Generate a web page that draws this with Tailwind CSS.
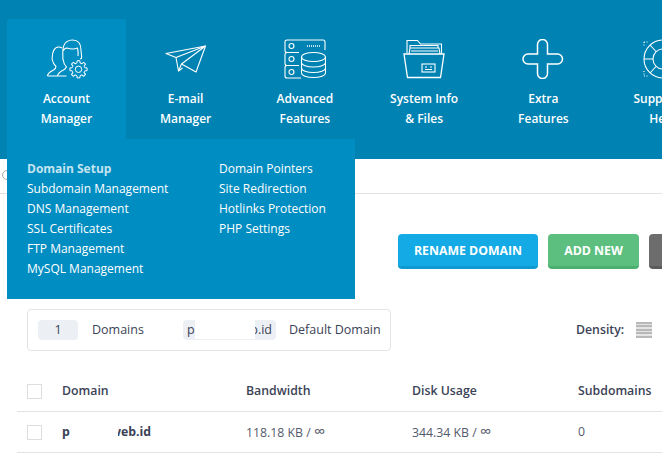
<!DOCTYPE html>
<html>
<head>
<meta charset="utf-8">
<script src="https://cdn.jsdelivr.net/npm/@tailwindcss/browser@4"></script>
</head>
<body class="bg-white overflow-hidden font-['Open_Sans',sans-serif]">
<div class="relative w-[662px] h-[459px] overflow-hidden">
  <header class="h-[159px] bg-[#0083b3] pt-[19px] pl-[7px] flex text-white text-[12px] leading-[20px] font-semibold text-center">
    <div class="w-[119px] h-[120px] shrink-0 bg-[#008dc2] rounded-t-[2px] pt-[20px]">
      <svg class="mx-auto w-[42px] h-[40px]" viewBox="0 0 42 40" fill="none" stroke="white" stroke-width="1.100" stroke-linejoin="round">
        <path d="M1.500 37c0-3 3-4.500 6-6 1.500-1 2.500-2 2.500-3.500-1.500-1.500-3-3.500-3.500-6-.5-1-.5-2-.3-3 0-5 2-10.500 6.300-10.500 1.500 0 2.700.3 3.500 1M1.500 37h10M11.500 37c.3-3 3-4.500 6-6 2-1 2.500-2 3-3.500M11.500 37h9"/>
        <path d="M20.500 28c-1.800-2-3-4.500-3.300-7-.5-1-.5-2-.3-3.500C16.500 12 16 1 26.500 1c6.500 0 8.500 5 8.500 10 0 3 1 5 .5 8.500l-1.500.5M17 12c1-2 3-3 4-3 3 1 8 1 10.500 0 .5 2 1 5 .5 8"/>
        <g transform="translate(32.500 30.300)" stroke-width="1">
          <circle r="3.200"/>
          <path d="M-2.490-6L-1.570-6.310-1.360-8.590 1.360-8.590 1.570-6.310 2.490-6"/>
          <path transform="rotate(45)" d="M-2.490-6L-1.570-6.310-1.360-8.590 1.360-8.590 1.570-6.310 2.490-6"/>
          <path transform="rotate(90)" d="M-2.490-6L-1.570-6.310-1.360-8.590 1.360-8.590 1.570-6.310 2.490-6"/>
          <path transform="rotate(135)" d="M-2.490-6L-1.570-6.310-1.360-8.590 1.360-8.590 1.570-6.310 2.490-6"/>
          <path transform="rotate(180)" d="M-2.490-6L-1.570-6.310-1.360-8.590 1.360-8.590 1.570-6.310 2.490-6"/>
          <path transform="rotate(225)" d="M-2.490-6L-1.570-6.310-1.360-8.590 1.360-8.590 1.570-6.310 2.490-6"/>
          <path transform="rotate(270)" d="M-2.490-6L-1.570-6.310-1.360-8.590 1.360-8.590 1.570-6.310 2.490-6"/>
          <path transform="rotate(315)" d="M-2.490-6L-1.570-6.310-1.360-8.590 1.360-8.590 1.570-6.310 2.490-6"/>
        </g>
      </svg>
      <div class="mt-[10px]">Account<br>Manager</div>
    </div>
    <div class="w-[119.250px] h-[120px] shrink-0 pt-[20px]">
      <svg class="mx-auto w-[42px] h-[40px]" viewBox="0 0 42 40" fill="none" stroke="white" stroke-width="1.100" stroke-linejoin="round">
        <path d="M1 14.500L40.500 7 31 33l-14.500-8-3 7-2.500-13.500z"/>
        <path d="M40.500 7L11 18.500M40.500 7L16.500 25M13.500 32l4-3"/>
      </svg>
      <div class="mt-[10px]">E-mail<br>Manager</div>
    </div>
    <div class="w-[119.250px] h-[120px] shrink-0 pt-[20px]">
      <svg class="mx-auto w-[42px] h-[40px]" viewBox="0 0 42 40" fill="none" stroke="white" stroke-width="1.100">
        <path d="M15 13.500H3a2 2 0 0 1-2-2V3a2 2 0 0 1 2-2h36a2 2 0 0 1 2 2v8"/>
        <path d="M15 26.500H3a2 2 0 0 1-2-2V15.500a2 2 0 0 1 2-2h12M15 26.500H3a2 2 0 0 0-2 2V37a2 2 0 0 0 2 2h14"/>
        <circle cx="7.500" cy="7" r="2.500"/><circle cx="7.500" cy="20" r="2.500"/><circle cx="7.500" cy="33" r="2.500"/>
        <path stroke-width="1.500" stroke-dasharray="1 1" d="M23 7h13"/>
        <ellipse cx="29.500" cy="18" rx="12" ry="4.500"/>
        <path d="M17.500 18v16c0 2.500 5.500 4.500 12 4.500s12-2 12-4.500V18M17.500 23.500c0 2.500 5.500 4.500 12 4.500s12-2 12-4.500M17.500 29c0 2.500 5.500 4.500 12 4.500s12-2 12-4.500"/>
      </svg>
      <div class="mt-[10px]">Advanced<br>Features</div>
    </div>
    <div class="w-[119.250px] h-[120px] shrink-0 pt-[20px]">
      <svg class="mx-auto w-[42px] h-[40px]" viewBox="0 0 42 40" fill="none" stroke="white" stroke-width="1.100">
        <path d="M4 14V1.500h10.500l3 3.500h21v10"/>
        <path d="M6 15l1-6h29l1 6M7 9V6.500h28V9M8 12h27"/>
        <path stroke-width="1.300" d="M1 15h40l-3.500 23.500h-33z"/>
        <rect x="19" y="25" width="13" height="8"/>
        <path d="M22 28h2M27 28h2M22 30.500h7"/>
      </svg>
      <div class="mt-[10px]">System Info<br>&amp; Files</div>
    </div>
    <div class="w-[119.250px] h-[120px] shrink-0 pt-[20px]">
      <svg class="mx-auto w-[42px] h-[40px]" viewBox="0 0 42 40" fill="none" stroke="white" stroke-width="1.500">
        <path d="M15.500 5.500a5 5 0 0 1 10 0v9.500H35.500a5 5 0 0 1 0 10H25.500v9.500a5 5 0 0 1-10 0V25H6a5 5 0 0 1 0-10h9.500z"/>
      </svg>
      <div class="mt-[10px]">Extra<br>Features</div>
    </div>
    <div class="w-[119.250px] h-[120px] shrink-0 pt-[20px]">
      <svg class="mx-auto w-[42px] h-[40px]" viewBox="0 0 42 40" fill="none" stroke="white" stroke-width="1.100">
        <circle cx="21" cy="20" r="19"/>
        <circle cx="21" cy="20" r="10"/>
        <path d="M8 6l6 6.500M34 6l-6 6.500M8 34l6-6.500M34 34l-6-6.500M2 20h9M31 20h9"/>
        <path stroke-dasharray="1 1.500" d="M2 3h4M2 3v5M2 32v5h4"/>
      </svg>
      <div class="mt-[10px]">Support &amp;<br>Help</div>
    </div>
  </header>

  <nav class="absolute left-[7px] top-[139px] w-[348px] h-[160px] bg-[#008dc2] pt-[20px] pl-[20px] flex text-[12px] leading-[20px] text-white">
    <ul class="w-[192px]">
      <li class="font-bold text-[#c4e4f0]">Domain Setup</li>
      <li>Subdomain Management</li>
      <li>DNS Management</li>
      <li>SSL Certificates</li>
      <li>FTP Management</li>
      <li>MySQL Management</li>
    </ul>
    <ul>
      <li>Domain Pointers</li>
      <li>Site Redirection</li>
      <li>Hotlinks Protection</li>
      <li>PHP Settings</li>
    </ul>
  </nav>

  <div class="h-[35px] border-b border-[#e2e2e2] pl-[2px] pt-[11px]">
    <div class="w-[10px] h-[10px] rounded-full border border-[#aaaaaa]"></div>
  </div>

  <div class="flex gap-[10px] pt-[40px] h-[75px] pl-[398px] text-white text-[12.300px] font-bold">
    <div class="w-[140px] shrink-0 h-[35px] rounded-[4px] bg-[#13aae6] border-b-[3px] border-[#0f99d0] pt-[3px] flex items-center justify-center">RENAME DOMAIN</div>
    <div class="w-[91px] shrink-0 h-[35px] rounded-[4px] bg-[#5cbf7f] border-b-[3px] border-[#4bb06f] pt-[3px] flex items-center justify-center">ADD NEW</div>
    <div class="w-[60px] shrink-0 h-[35px] rounded-[4px] bg-[#6d6d6d] border-b-[3px] border-[#5c5c5c]"></div>
  </div>

  <div class="flex items-center pl-[27px] mt-[40px] text-[12.500px] text-[#3b4256]">
    <div class="relative w-[364px] h-[42px] border border-[#e2e5e8] rounded-[4px] flex items-center pl-[10px]">
      <div class="w-[40px] h-[20px] bg-[#ecf0f5] rounded-[4px] text-center leading-[20px]">1</div>
      <div class="ml-[14px] w-[91px]">Domains</div>
      <div class="relative w-[93px] h-[20px] bg-[#ecf0f5] rounded-[4px] leading-[20px] px-[4px] flex justify-between">
        <span>p</span><span>web.id</span>
        <div class="absolute left-[12px] top-0 w-[60px] h-[19px] bg-white"></div>
      </div>
      <div class="ml-[13px]">Default Domain</div>
    </div>
    <div class="ml-[185px] w-[60px] font-semibold text-[12.300px]">Density:</div>
    <div class="w-[16px] h-[16px] bg-[repeating-linear-gradient(#b8b8b8_0,#b8b8b8_2px,#e4e4e4_2px,#e4e4e4_3.500px)]"></div>
  </div>

  <div class="mt-[24px] ml-[17px] w-[645px] text-[12.300px] text-[#3b4256]">
    <div class="flex items-center h-[37px] border-b border-[#e2e2e2] pb-[3px] font-semibold">
      <div class="w-[15px] h-[15px] border border-[#dddddd] ml-[10px]"></div>
      <div class="ml-[20px] w-[184px]">Domain</div>
      <div class="w-[166px]">Bandwidth</div>
      <div class="w-[166px]">Disk Usage</div>
      <div>Subdomains</div>
    </div>
    <div class="flex items-center h-[41px] border-b border-[#e2e2e2]">
      <div class="w-[15px] h-[15px] border border-[#dddddd] ml-[10px]"></div>
      <div class="ml-[20px] w-[184px] font-bold flex pt-[1px]">
        <span class="w-[56px]">p</span><span class="w-[33px] overflow-hidden flex justify-end"><span class="shrink-0">web.id</span></span>
      </div>
      <div class="w-[166px] text-[#555b6b] pt-[1px]">118.18 KB / <span class="text-[16px] leading-none">∞</span></div>
      <div class="w-[166px] text-[#555b6b] pt-[1px]">344.34 KB / <span class="text-[16px] leading-none">∞</span></div>
      <div class="text-[#555b6b] pt-[1px]">0</div>
    </div>
  </div>
</div>
</body>
</html>
